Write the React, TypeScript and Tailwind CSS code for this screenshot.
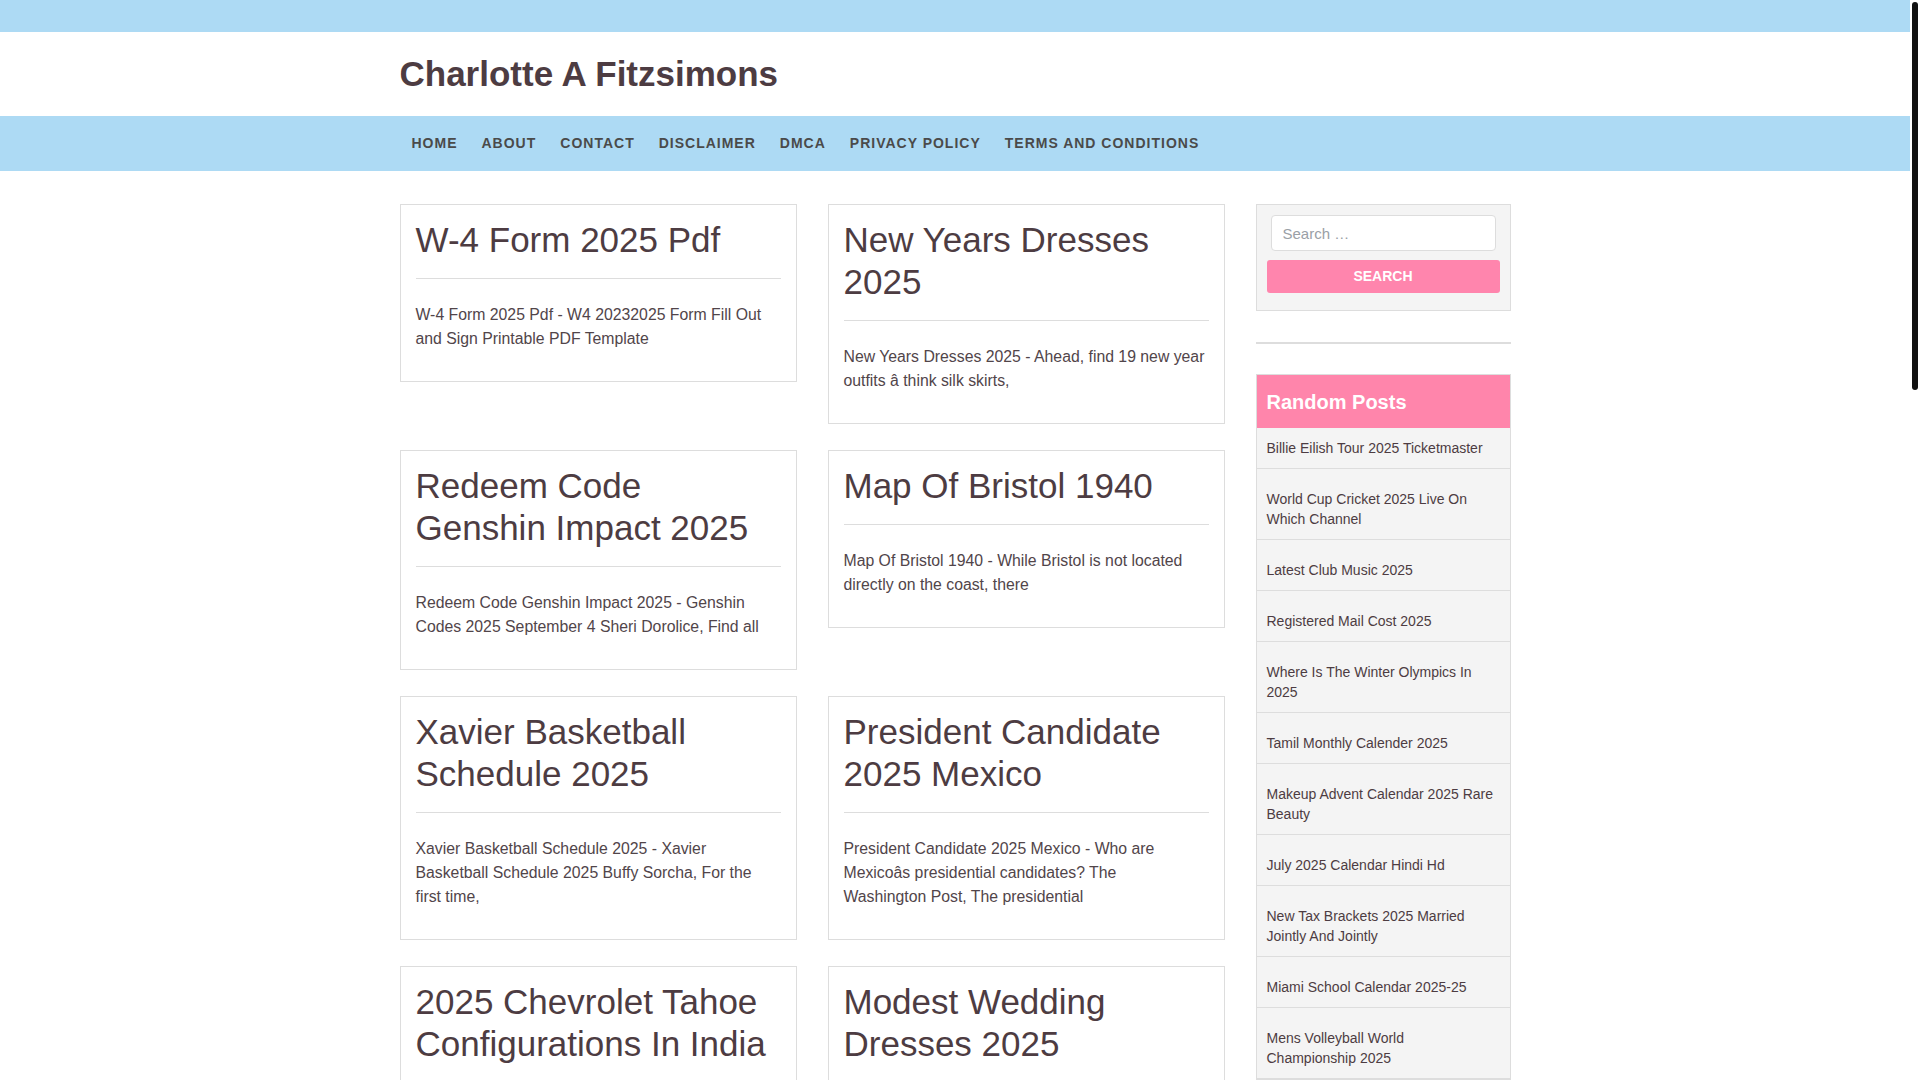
import { useState, type ReactNode } from "react";

type Post = {
  title: string;
  excerpt: ReactNode;
};

const menu = [
  "Home",
  "About",
  "Contact",
  "Disclaimer",
  "DMCA",
  "Privacy Policy",
  "Terms and Conditions",
];

const posts: Post[] = [
  {
    title: "W-4 Form 2025 Pdf",
    excerpt: "W-4 Form 2025 Pdf - W4 20232025 Form Fill Out and Sign Printable PDF Template",
  },
  {
    title: "New Years Dresses 2025",
    excerpt: "New Years Dresses 2025 - Ahead, find 19 new year outfits â think silk skirts,",
  },
  {
    title: "Redeem Code Genshin Impact 2025",
    excerpt:
      "Redeem Code Genshin Impact 2025 - Genshin Codes 2025 September 4 Sheri Dorolice, Find all",
  },
  {
    title: "Map Of Bristol 1940",
    excerpt: "Map Of Bristol 1940 - While Bristol is not located directly on the coast, there",
  },
  {
    title: "Xavier Basketball Schedule 2025",
    excerpt:
      "Xavier Basketball Schedule 2025 - Xavier Basketball Schedule 2025 Buffy Sorcha, For the first time,",
  },
  {
    title: "President Candidate 2025 Mexico",
    // the mangled quote carries a bit of invisible width in the original, so the line breaks earlier
    excerpt: (
      <>
        President Candidate 2025 Mexico - Who are Mexicoâs presidential candidates?{" "}
        <span className="mr-[5px]">The</span> Washington Post, The presidential
      </>
    ),
  },
  {
    title: "2025 Chevrolet Tahoe Configurations In India",
    excerpt:
      "2025 Chevrolet Tahoe Configurations In India - The 2025 Tahoe lineup keeps its familiar trims,",
  },
  {
    title: "Modest Wedding Dresses 2025",
    excerpt: "Modest Wedding Dresses 2025 - Long sleeves, high necklines and soft lace details,",
  },
];

const randomPosts = [
  "Billie Eilish Tour 2025 Ticketmaster",
  "World Cup Cricket 2025 Live On Which Channel",
  "Latest Club Music 2025",
  "Registered Mail Cost 2025",
  "Where Is The Winter Olympics In 2025",
  "Tamil Monthly Calender 2025",
  "Makeup Advent Calendar 2025 Rare Beauty",
  "July 2025 Calendar Hindi Hd",
  "New Tax Brackets 2025 Married Jointly And Jointly",
  "Miami School Calendar 2025-25",
  "Mens Volleyball World Championship 2025",
];

function PostCard({ post }: { post: Post }) {
  return (
    <article className="border border-[#dddddd] bg-white px-[15px] pt-[14px] pb-[30px]">
      <h2 className="text-[35px] leading-[42px] font-normal text-[#4d3c42]">
        <a href="#">{post.title}</a>
      </h2>
      <hr className="mt-[17px] border-0 border-t border-[#dddddd]" />
      <p className="mt-[24px] text-[15.8px] leading-[24px] text-[#51454a]">{post.excerpt}</p>
    </article>
  );
}

export default function App() {
  const [query, setQuery] = useState("");

  return (
    <div className="min-h-screen bg-white font-['Liberation_Sans',Arial,sans-serif] text-[#4d3c42]">
      {/* scrollbar thumb as seen in the capture */}
      <div className="fixed top-[2px] right-[2px] h-[388px] w-[6px] rounded-full bg-[#111111]" />

      <div className="mr-[10px]">
        {/* top strip */}
        <div className="h-[32px] bg-[#addaf4]" />

        {/* site title */}
        <header className="bg-white">
          <div className="mx-auto flex h-[84px] max-w-[1111px] items-center">
            <h1 className="text-[35px] font-bold text-[#4d3c42]">
              <a href="#">Charlotte A Fitzsimons</a>
            </h1>
          </div>
        </header>

        {/* menu */}
        <nav className="bg-[#addaf4]">
          <ul className="mx-auto flex h-[55px] max-w-[1111px] items-center">
            {menu.map((item) => (
              <li key={item}>
                <a
                  href="#"
                  className="block px-3 text-[14px] font-bold uppercase tracking-[1px] text-[#4a4a4a]"
                >
                  {item}
                </a>
              </li>
            ))}
          </ul>
        </nav>

        <main className="mx-auto grid max-w-[1111px] grid-cols-[825px_255px] gap-x-[31px] pt-[33px] pb-10">
          {/* posts */}
          <div className="grid grid-cols-2 items-start gap-x-[31px] gap-y-[26px]">
            {posts.map((post) => (
              <PostCard key={post.title} post={post} />
            ))}
          </div>

          {/* sidebar */}
          <aside>
            <div className="border border-[#dddddd] bg-[#f4f4f4] px-[10px] pt-[10px] pb-[17px]">
              <form onSubmit={(e) => e.preventDefault()}>
                <input
                  type="search"
                  value={query}
                  onChange={(e) => setQuery(e.target.value)}
                  placeholder="Search …"
                  className="mx-1 block h-[36px] w-[calc(100%-8px)] rounded-[4px] border border-[#dddddd] bg-white px-[11px] text-[15px] text-[#4d3c42] placeholder:text-[#9aa0a6] outline-none"
                />
                <button
                  type="submit"
                  className="mt-[9px] block h-[33px] w-full rounded-[3px] bg-[#ff85ad] text-[14px] font-bold uppercase text-white"
                >
                  Search
                </button>
              </form>
            </div>

            <div className="mt-[31px] h-[2px] bg-[#dddddd]" />

            <div className="mt-[30px] border border-[#dddddd]">
              <h3 className="flex h-[53px] items-center bg-[#ff85ab] px-[10px] text-[20px] font-bold text-white">
                Random Posts
              </h3>
              <ul className="space-y-[10px] bg-[#f4f4f4]">
                {randomPosts.map((title) => (
                  <li key={title} className="border-b border-[#dddddd] py-[10px] pr-[14px] pl-[10px]">
                    <a href="#" className="block text-[14px] leading-[20px] text-[#4d3c42]">
                      {title}
                    </a>
                  </li>
                ))}
              </ul>
            </div>
          </aside>
        </main>
      </div>
    </div>
  );
}
